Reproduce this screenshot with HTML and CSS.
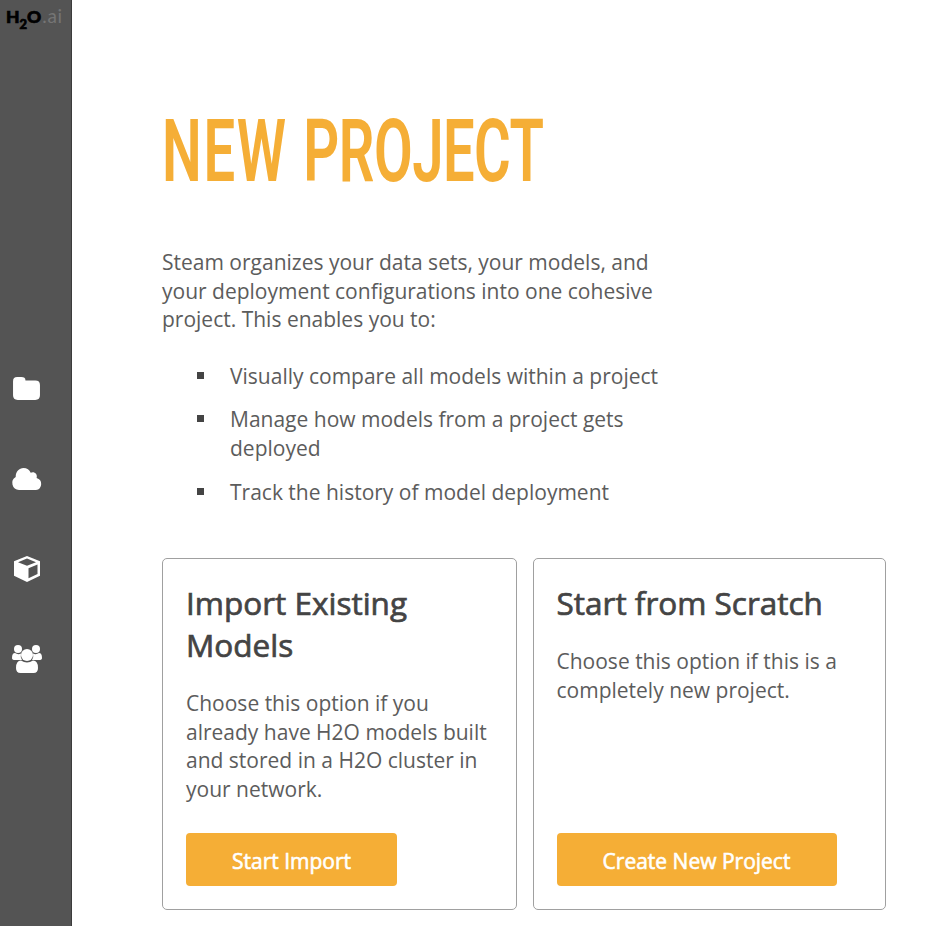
FILE: index.html
```html
<!DOCTYPE html>
<html lang="en">
<head>
<meta charset="utf-8">
<title>New Project</title>
<link rel="stylesheet" href="styles.css">
</head>
<body>
<div class="app">
  <nav class="sidebar">
    <div class="logo"><b>H<span class="sub">2</span><span class="wide-o">O</span></b><span class="ai">.ai</span></div>
    <div class="nav-items">
      <a class="nav-item"><svg width="29" height="25" viewBox="0 0 28 24"><path d="M1 5Q1 1 5 1H9Q13 1 13 4.200H22.500Q27 4.200 27 8.500V18.500Q27 23 22.500 23H5.500Q1 23 1 18.500Z"/></svg></a>
      <a class="nav-item"><svg width="32" height="24" viewBox="0 0 32 24"><path d="M8 23A7 7 0 0 1 4.700 10C4.600 4.500 8.200 1 12.500 1C16 1 18.500 3 19.700 5.800C22.500 3.800 27 6.500 25.600 10.900A6.200 6.200 0 0 1 25 23Z"/></svg></a>
      <a class="nav-item"><svg width="28" height="28" viewBox="0 0 28 28"><path fill-rule="evenodd" d="M14 1L27 6.200V20.800L14 27L1 20.800V6.200ZM14 3.600L5 7.200L14 10.800L23 7.200ZM15.500 13.200V23.300L24.500 19V9.400Z"/></svg></a>
      <a class="nav-item"><svg width="32" height="30" viewBox="0 0 32 30"><circle cx="7" cy="5" r="4"/><circle cx="25" cy="5" r="4"/><path d="M1 14Q1 9 4 9Q7 11 10 9.500Q9 13 11 16H4Q1 16 1 14ZM31 14Q31 9 28 9Q25 11 22 9.500Q23 13 21 16H28Q31 16 31 14Z"/><circle cx="16" cy="11" r="6"/><path d="M5 24Q5 16.500 10 16.500Q16 20.500 22 16.500Q27 16.500 27 24Q27 29 22.500 29H9.500Q5 29 5 24Z"/></svg></a>
    </div>
  </nav>
  <main class="content">
    <h1 class="title"><span class="title-text"><span class="loose">NEW </span><span class="tight">PROJECT</span></span></h1>
    <p class="intro">Steam organizes your data sets, your models, and<br>your deployment configurations into one cohesive<br>project. This enables you to:</p>
    <ul class="benefits">
      <li>Visually compare all models within a project</li>
      <li>Manage how models from a project gets<br>deployed</li>
      <li>Track the history of model deployment</li>
    </ul>
    <div class="cards">
      <section class="card">
        <h2>Import Existing<br>Models</h2>
        <p>Choose this option if you<br>already have H2O models built<br>and stored in a H2O cluster in<br>your network.</p>
        <button class="btn">Start Import</button>
      </section>
      <section class="card">
        <h2>Start from Scratch</h2>
        <p>Choose this option if this is a<br>completely new project.</p>
        <button class="btn btn-wide">Create New Project</button>
      </section>
    </div>
  </main>
</div>
</body>
</html>
```
FILE: styles.css
```css
* { box-sizing: border-box; }
body {
  margin: 0;
  background: #fff;
  color: #5c5c5c;
  font: 400 21px/28.6px "Open Sans", sans-serif;
}
h1, h2, p, ul { margin: 0; padding: 0; }
.app { display: flex; width: 932px; height: 926px; overflow: hidden; }
.sidebar {
  flex: none;
  width: 72px;
  background: #545454;
  border-right: 1px solid #3c3c3c;
}
.logo {
  height: 36px;
  padding: 2px 0 0 6px;
  color: #000;
  font: 900 17.5px/28px Lato, sans-serif;
  white-space: nowrap;
}
.logo b { font-weight: 900; -webkit-text-stroke: 0.7px #000; }
.sub { font-size: 13px; position: relative; top: 6px; }
.wide-o { letter-spacing: 1px; }
.ai { color: #757575; font-weight: 400; font-size: 19px; letter-spacing: 0.7px; }
.nav-items { padding-top: 307px; }
.nav-item {
  display: flex;
  align-items: center;
  justify-content: center;
  width: 53px;
  height: 90.4px;
}
.nav-item svg { fill: #fff; flex: none; }
.content { flex: none; width: 815px; padding: 99px 0 0 90px; }
.title {
  height: 149px;
  color: #f5ae36;
  font: 600 88px/104px Roboto, sans-serif;
  white-space: nowrap;
}
.title-text { display: inline-block; transform: scaleX(0.638); transform-origin: 0 0; }
.loose { letter-spacing: 2.6px; }
.tight { letter-spacing: -0.8px; }
.benefits { list-style: none; padding: 28px 0 0 34px; }
.benefits li {
  display: flow-root;
  padding-left: 34px;
  margin-bottom: 15px;
  background: linear-gradient(#444, #444) 1px 10px / 7px 7px no-repeat;
}
.cards { display: flex; gap: 16px; margin-top: 52px; }
.card {
  display: flex;
  flex-direction: column;
  align-items: flex-start;
  width: 355px;
  height: 352px;
  padding: 23px 23px;
  border: 1px solid #a0a0a0;
  border-radius: 5px;
}
.card + .card { width: 353px; padding-left: 22.500px; }
.card h2 {
  margin-bottom: 23px;
  color: #444;
  font: 400 31.5px/42px "Open Sans", sans-serif;
  -webkit-text-stroke: 0.7px #444;
}
.btn {
  width: 211px;
  height: 53px;
  margin-top: auto;
  padding: 3px 0 0;
  border: 0;
  border-radius: 4px;
  background: #f5ae36;
  color: #fff;
  font: 400 21px/28px "Open Sans", sans-serif;
  -webkit-text-stroke: 0.6px #fff;
}
.btn-wide { width: 280px; }
```
